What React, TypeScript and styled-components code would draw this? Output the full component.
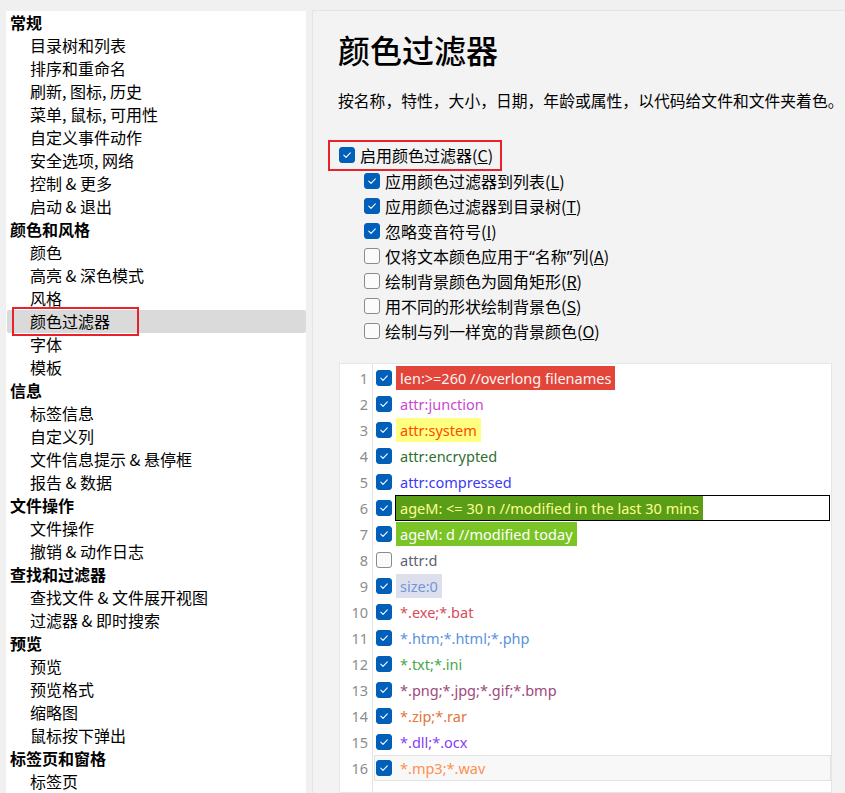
import React from "react";
import styled, { createGlobalStyle, css } from "styled-components";

const GlobalStyle = createGlobalStyle`
  html, body {
    margin: 0;
    padding: 0;
    background: #f0f0f0;
  }
  body {
    font-family: "Noto Sans CJK SC", "Noto Sans", sans-serif;
    color: #000;
  }
`;

const Shell = styled.div`
  display: grid;
  grid-template-columns: 300px 1fr;
  column-gap: 6px;
  padding: 11px 0 0 6px;
  height: 793px;
  box-sizing: border-box;
  overflow: hidden;
`;

const Sidebar = styled.nav`
  background: #fff;
  display: flex;
  flex-direction: column;
`;

const NavRow = styled.div<{ $header?: boolean; $selected?: boolean }>`
  height: 23px;
  line-height: 23px;
  font-size: 16px;
  white-space: nowrap;
  padding-left: ${(p) => (p.$header ? "4px" : "24px")};
  font-weight: ${(p) => (p.$header ? 700 : 400)};
  ${(p) =>
    p.$selected &&
    css`
      background: #dadada;
      margin-left: 1px;
      padding-left: 23px;
      border-radius: 2px;
    `}
`;

const Marked = styled.span<{ $l: number; $r: number }>`
  position: relative;
  &::after {
    content: "";
    position: absolute;
    left: -${(p) => p.$l}px;
    right: -${(p) => p.$r}px;
    top: -2px;
    bottom: -3px;
    border: 2px solid #e8222a;
    pointer-events: none;
  }
`;

const Content = styled.main`
  background: #f3f3f3;
  border-top: 1px solid #e4e4e4;
  border-left: 1px solid #e4e4e4;
  margin-top: -1px;
  padding: 16px 13px 0 25px;
  display: flex;
  flex-direction: column;
  overflow: hidden;
`;

const Title = styled.h1`
  margin: 0;
  font-size: 32px;
  font-weight: 500;
  line-height: 44px;
`;

const Description = styled.p`
  margin: 18px 0 0 0;
  font-size: 15.8px;
  line-height: 24px;
  white-space: nowrap;
`;

const Options = styled.div`
  margin-top: 29px;
  display: flex;
  flex-direction: column;
  align-items: flex-start;
`;

const OptionRow = styled.label<{ $sub?: boolean }>`
  display: flex;
  align-items: center;
  gap: 5px;
  height: 25px;
  font-size: 16px;
  white-space: nowrap;
  padding-left: ${(p) => (p.$sub ? "26px" : "1px")};
  margin-bottom: ${(p) => (p.$sub ? "0" : "1px")};
`;

const Quote = styled.span`
  font-family: "Noto Sans", sans-serif;
`;

const Box = styled.span<{ $checked: boolean }>`
  flex: none;
  width: 16px;
  height: 16px;
  box-sizing: border-box;
  border-radius: 3px;
  display: inline-flex;
  align-items: center;
  justify-content: center;
  ${(p) =>
    p.$checked
      ? css`
          background: #005fb8;
          border: 1px solid #005fb8;
        `
      : css`
          background: #fbfbfb;
          border: 1px solid #8b8b8b;
        `}
`;

const FilterPanel = styled.section`
  margin-top: 20px;
  margin-left: 1px;
  background: #fff;
  border: 1px solid #e6e6e6;
  display: grid;
  grid-template-columns: 33px 1fr;
  flex: 1;
`;

const Gutter = styled.div`
  border-right: 1px solid #e4e4e4;
  padding-top: 1px;
  display: flex;
  flex-direction: column;
`;

const LineNo = styled.div`
  height: 26px;
  line-height: 26px;
  text-align: right;
  padding-right: 4px;
  font-family: "Noto Sans", sans-serif;
  font-size: 14.5px;
  color: #8c8c8c;
`;

const Lines = styled.div`
  padding-top: 1px;
  display: flex;
  flex-direction: column;
`;

const FilterRow = styled.div<{ $hover?: boolean }>`
  height: 26px;
  box-sizing: border-box;
  margin-left: 1px;
  padding-left: 1px;
  display: flex;
  align-items: center;
  gap: 3px;
  border: 1px solid ${(p) => (p.$hover ? "#e2e2e2" : "transparent")};
  background: ${(p) => (p.$hover ? "#f8f8f8" : "transparent")};
`;

const TextCell = styled.div<{ $focused?: boolean }>`
  flex: 1;
  align-self: stretch;
  display: flex;
  box-sizing: border-box;
  border: 1px solid ${(p) => (p.$focused ? "#000" : "transparent")};
  margin: -1px 0;
`;

const FilterText = styled.span<{ $fg: string; $bg?: string }>`
  display: inline-flex;
  align-items: center;
  padding: 0 4px 0 4px;
  font-family: "Noto Sans", sans-serif;
  font-size: 14.5px;
  white-space: nowrap;
  color: ${(p) => p.$fg};
  background: ${(p) => p.$bg || "transparent"};
`;

function Check({ checked }: { checked: boolean }) {
  return (
    <Box $checked={checked}>
      {checked && (
        <svg width="10" height="10" viewBox="0 0 10 10">
          <path d="M1.8 5.2 L4 7.3 L8.3 2.9" fill="none" stroke="#fff" strokeWidth="1.1" strokeLinecap="round" strokeLinejoin="round" />
        </svg>
      )}
    </Box>
  );
}

type Nav = { label: string; header?: boolean; selected?: boolean };

const nav: Nav[] = [
  { label: "常规", header: true },
  { label: "目录树和列表" },
  { label: "排序和重命名" },
  { label: "刷新, 图标, 历史" },
  { label: "菜单, 鼠标, 可用性" },
  { label: "自定义事件动作" },
  { label: "安全选项, 网络" },
  { label: "控制 & 更多" },
  { label: "启动 & 退出" },
  { label: "颜色和风格", header: true },
  { label: "颜色" },
  { label: "高亮 & 深色模式" },
  { label: "风格" },
  { label: "颜色过滤器", selected: true },
  { label: "字体" },
  { label: "模板" },
  { label: "信息", header: true },
  { label: "标签信息" },
  { label: "自定义列" },
  { label: "文件信息提示 & 悬停框" },
  { label: "报告 & 数据" },
  { label: "文件操作", header: true },
  { label: "文件操作" },
  { label: "撤销 & 动作日志" },
  { label: "查找和过滤器", header: true },
  { label: "查找文件 & 文件展开视图" },
  { label: "过滤器 & 即时搜索" },
  { label: "预览", header: true },
  { label: "预览" },
  { label: "预览格式" },
  { label: "缩略图" },
  { label: "鼠标按下弹出" },
  { label: "标签页和窗格", header: true },
  { label: "标签页" },
];

const options: { text: React.ReactNode; key: string; checked: boolean }[] = [
  { text: "应用颜色过滤器到列表", key: "L", checked: true },
  { text: "应用颜色过滤器到目录树", key: "T", checked: true },
  { text: "忽略变音符号", key: "I", checked: true },
  {
    text: (
      <>
        仅将文本颜色应用于<Quote>“</Quote>名称<Quote>”</Quote>列
      </>
    ),
    key: "A",
    checked: false,
  },
  { text: "绘制背景颜色为圆角矩形", key: "R", checked: false },
  { text: "用不同的形状绘制背景色", key: "S", checked: false },
  { text: "绘制与列一样宽的背景颜色", key: "O", checked: false },
];

type Filter = { text: string; fg: string; bg?: string; checked?: boolean; focused?: boolean; hover?: boolean };

const filters: Filter[] = [
  { text: "len:>=260 //overlong filenames", fg: "#fff4f0", bg: "#e2453a" },
  { text: "attr:junction", fg: "#c848d0" },
  { text: "attr:system", fg: "#ff4a00", bg: "#ffff80" },
  { text: "attr:encrypted", fg: "#2f7030" },
  { text: "attr:compressed", fg: "#3b3bf5" },
  { text: "ageM: <= 30 n //modified in the last 30 mins", fg: "#ffff90", bg: "#5a9e18", focused: true },
  { text: "ageM: d //modified today", fg: "#ffffff", bg: "#7ac425" },
  { text: "attr:d", fg: "#5c6374", checked: false },
  { text: "size:0", fg: "#7095d8", bg: "#dde0ec" },
  { text: "*.exe;*.bat", fg: "#d84a58" },
  { text: "*.htm;*.html;*.php", fg: "#5b92e0" },
  { text: "*.txt;*.ini", fg: "#46a848" },
  { text: "*.png;*.jpg;*.gif;*.bmp", fg: "#a0487c" },
  { text: "*.zip;*.rar", fg: "#e0783a" },
  { text: "*.dll;*.ocx", fg: "#8a3cf0" },
  { text: "*.mp3;*.wav", fg: "#ff9050", hover: true },
];

export default function App() {
  return (
    <>
      <GlobalStyle />
      <Shell>
        <Sidebar>
          {nav.map((n, i) => (
            <NavRow key={i} $header={n.header} $selected={n.selected}>
              {n.selected ? (
                <Marked $l={18} $r={29}>
                  {n.label}
                </Marked>
              ) : (
                n.label
              )}
            </NavRow>
          ))}
        </Sidebar>
        <Content>
          <Title>颜色过滤器</Title>
          <Description>按名称，特性，大小，日期，年龄或属性，以代码给文件和文件夹着色。</Description>
          <Options>
            <Marked $l={10} $r={9}>
              <OptionRow>
                <Check checked />
                <span>
                  启用颜色过滤器(<u>C</u>)
                </span>
              </OptionRow>
            </Marked>
            {options.map((o) => (
              <OptionRow key={o.key} $sub>
                <Check checked={o.checked} />
                <span>
                  {o.text}(<u>{o.key}</u>)
                </span>
              </OptionRow>
            ))}
          </Options>
          <FilterPanel>
            <Gutter>
              {filters.map((_, i) => (
                <LineNo key={i}>{i + 1}</LineNo>
              ))}
            </Gutter>
            <Lines>
              {filters.map((f, i) => (
                <FilterRow key={i} $hover={f.hover}>
                  <Check checked={f.checked !== false} />
                  <TextCell $focused={f.focused}>
                    <FilterText $fg={f.fg} $bg={f.bg}>
                      {f.text}
                    </FilterText>
                  </TextCell>
                </FilterRow>
              ))}
            </Lines>
          </FilterPanel>
        </Content>
      </Shell>
    </>
  );
}
